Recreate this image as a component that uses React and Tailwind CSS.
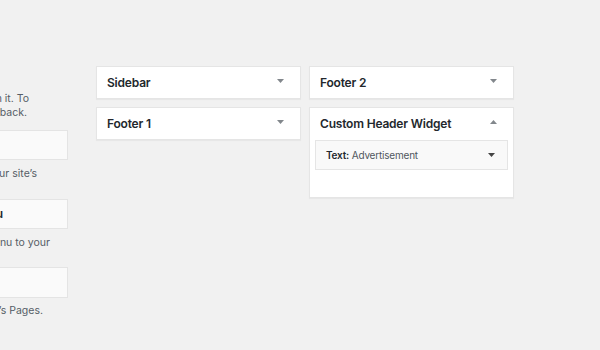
import React from 'react';

const font = { fontFamily: 'Inter, "Liberation Sans", sans-serif' };

function Caret({ up = false, dark = false }) {
  return (
    <svg width="7" height="4" viewBox="0 0 7 4" className={dark ? 'text-[#444]' : 'text-[#82878c]'}>
      {up ? <path d="M0 4 L3.5 0 L7 4 Z" fill="currentColor" /> : <path d="M0 0 L7 0 L3.5 4 Z" fill="currentColor" />}
    </svg>
  );
}

function Area({ title, open = false, children }) {
  return (
    <div className="bg-white border border-[#e5e5e5] shadow-[0_1px_1px_rgba(0,0,0,0.04)]">
      <div className="h-[31px] flex items-center justify-between pl-[10px] pr-[16px]">
        <h3 className="text-[12px] tracking-[-0.2px] font-semibold text-[#23282d]">{title}</h3>
        <div className={open ? 'pb-[3px]' : 'pb-[4px]'}>
          <Caret up={open} />
        </div>
      </div>
      {children}
    </div>
  );
}

// lines of the clipped panel: right-aligned so the end of each line shows
function LeftLine({ text, pr }) {
  return (
    <div className={`flex justify-end leading-[14px] ${pr}`}>
      <span className="shrink-0 whitespace-nowrap">{text}</span>
    </div>
  );
}

export default function App() {
  return (
    <div className="w-[600px] h-[350px] bg-[#f1f1f1] overflow-hidden flex" style={font}>
      {/* available widgets panel, mostly off screen */}
      <div className="w-[68px] shrink-0 overflow-hidden pt-[92px] text-[10.5px] text-[#555d66]">
        <LeftLine text="Drag widgets into the area or click on it. To" pr="pr-[39px]" />
        <LeftLine text="remove a widget, drag it back." pr="pr-[41px]" />

        <div className="mt-[10px] h-[30px] bg-[#fafafa] border-y border-r border-[#e4e4e4]" />
        <LeftLine text="A monthly archive of your site’s" pr="pr-[31px] mt-[7px]" />

        <div className="mt-[18px] h-[30px] bg-[#fafafa] border-y border-r border-[#e4e4e4] flex items-center justify-end pr-[64px]">
          <span className="shrink-0 whitespace-nowrap text-[12px] font-semibold text-[#23282d]">Custom Menu</span>
        </div>
        <LeftLine text="Add a custom menu to your" pr="pr-[18px] mt-[7px]" />

        <div className="mt-[17px] h-[31px] bg-[#fafafa] border-y border-r border-[#e4e4e4]" />
        <LeftLine text="A list of your site’s Pages." pr="pr-[25px] mt-[6px]" />
      </div>

      {/* widget areas */}
      <div className="ml-[28px] pt-[66px] flex gap-[8px]">
        <div className="w-[205px] flex flex-col gap-[8px]">
          <Area title="Sidebar" />
          <Area title="Footer 1" />
        </div>
        <div className="w-[205px] flex flex-col gap-[8px]">
          <Area title="Footer 2" />
          <Area title="Custom Header Widget" open>
            <div className="mx-[5px] mt-[1px] mb-[27px] h-[30px] bg-[#f9f9f9] border border-[#e5e5e5] flex items-center justify-between pl-[10px] pr-[12px]">
              <span className="text-[10px] tracking-[-0.2px] text-[#23282d]">
                <span className="font-semibold">Text:</span> <span className="text-[#50575e]">Advertisement</span>
              </span>
              <Caret dark />
            </div>
          </Area>
        </div>
      </div>
    </div>
  );
}
